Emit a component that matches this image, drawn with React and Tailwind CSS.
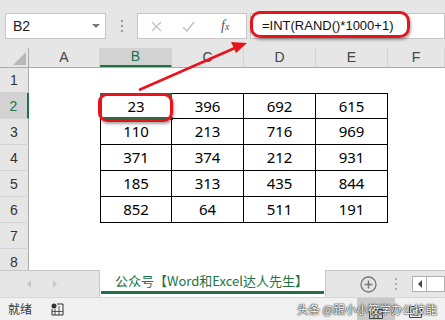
import React from 'react';

const cols = ['A', 'B', 'C', 'D', 'E', 'F'];
const colW = ['w-[71px]', 'w-[72px]', 'w-[72px]', 'w-[72px]', 'w-[72px]', 'flex-1'];

const data = [
  [23, 396, 692, 615],
  [110, 213, 716, 969],
  [371, 374, 212, 931],
  [185, 313, 435, 844],
  [852, 64, 511, 191],
];

const rows = [1, 2, 3, 4, 5, 6, 7, 8];

const Toolbar = () => (
  <div className="h-[48px] bg-[#e6e6e6] flex items-center pt-[4px] pl-[5px] gap-0">
    {/* Name box */}
    <div className="w-[101px] h-[26px] bg-white border border-[#c6c6c6] flex items-center justify-between pl-[7px] pr-[5px]">
      <span className="text-[14px] text-[#222]">B2</span>
      <span className="w-0 h-0 border-l-[4px] border-r-[4px] border-t-[4px] border-l-transparent border-r-transparent border-t-[#777]" />
    </div>
    {/* separator dots */}
    <div className="w-[31px] flex flex-col items-center gap-[3px]">
      <span className="w-[2px] h-[2px] bg-[#999]" />
      <span className="w-[2px] h-[2px] bg-[#999]" />
      <span className="w-[2px] h-[2px] bg-[#999]" />
    </div>
    {/* cancel / enter / fx */}
    <div className="w-[110px] h-[26px] bg-white border border-[#c6c6c6] flex items-center pl-[13px] gap-[20px]">
      <svg width="11" height="11" viewBox="0 0 11 11">
        <path d="M1 1 L10 10 M10 1 L1 10" stroke="#c4c4c4" strokeWidth="1.4" fill="none" />
      </svg>
      <svg width="13" height="11" viewBox="0 0 13 11">
        <path d="M1 6 L5 10 L12 1" stroke="#c4c4c4" strokeWidth="1.6" fill="none" />
      </svg>
      <span className="ml-[6px] text-[14px] italic text-[#555] font-['Liberation_Serif'] leading-none">
        f<span className="text-[10px]">x</span>
      </span>
    </div>
    {/* formula input */}
    <div className="ml-[3px] flex-1 h-[26px] bg-white border border-[#c6c6c6] flex items-center pl-[11px]">
      <span className="text-[13px] text-[#111]">=INT(RAND()*1000+1)</span>
    </div>
  </div>
);

const HeaderRow = () => (
  <div className="flex h-[20px] bg-[#e6e6e6] border-b border-[#ababab]">
    <div className="w-[29px] border-r border-[#ababab] flex items-end justify-end pr-[2px] pb-[2px]">
      <svg width="13" height="13" viewBox="0 0 13 13">
        <polygon points="13,0 13,13 0,13" fill="#b8b8b8" />
      </svg>
    </div>
    {cols.map((c, i) => (
      <div
        key={c}
        className={`${colW[i]} flex items-center justify-center text-[14px] border-r border-[#d4d4d4] ${
          c === 'B' ? 'bg-[#d2d2d2] text-[#217346] border-b-2 border-b-[#217346]' : 'text-[#444]'
        }`}
      >
        {c}
      </div>
    ))}
  </div>
);

const SheetRow = ({ n }) => {
  const vals = n >= 2 && n <= 6 ? data[n - 2] : null;
  const h = n === 1 ? 'h-[25px]' : 'h-[26px]';
  return (
    <div className={`flex ${h}`}>
      <div
        className={`w-[29px] shrink-0 border-r border-b border-[#ababab] border-b-[#d4d4d4] flex items-end justify-center pb-[1px] text-[14px] ${
          n === 2 ? 'bg-[#d2d2d2] text-[#217346] border-r-2 border-r-[#217346]' : 'bg-[#e6e6e6] text-[#333]'
        }`}
      >
        {n}
      </div>
      <div className="w-[71px]" />
      {[0, 1, 2, 3].map((j) => (
        <div
          key={j}
          className={`w-[72px] flex items-center justify-center text-[15px] text-black font-['Noto_Sans'] relative ${
            vals ? 'border-r border-b border-black' : ''
          } ${vals && j === 0 ? 'border-l' : ''} ${n === 2 ? 'border-t' : ''}`}
        >
          {vals ? vals[j] : ''}
          {n === 2 && j === 0 && (
            <>
              <span className="absolute inset-[-1px] border-2 border-[#217346]" />
              <span className="absolute right-[-3px] bottom-[-3px] w-[5px] h-[5px] bg-[#217346] border border-white" />
            </>
          )}
        </div>
      ))}
      <div className="flex-1" />
    </div>
  );
};

const TabBar = () => (
  <div className="h-[27px] flex">
    <div className="w-[100px] bg-[#e6e6e6] border-t border-r border-[#c6c6c6] flex items-center pl-[27px] gap-[22px]">
      <span className="w-0 h-0 border-t-[4px] border-b-[4px] border-r-[4px] border-t-transparent border-b-transparent border-r-[#c8c8c8]" />
      <span className="w-0 h-0 border-t-[4px] border-b-[4px] border-l-[4px] border-t-transparent border-b-transparent border-l-[#c8c8c8]" />
    </div>
    <div className="w-[225px] bg-white flex flex-col">
      <div className="flex-1 flex items-center pl-[15px] text-[13px] text-[#217346] font-['Noto_Sans_CJK_SC',sans-serif] leading-none">
        公众号【Word和Excel达人先生】
      </div>
      <div className="h-[3px] bg-[#217346] mx-[1px] mb-[3px]" />
    </div>
    <div className="flex-1 bg-[#e6e6e6] border-t border-l border-[#c6c6c6] flex items-center pl-[34px]">
      <svg width="17" height="17" viewBox="0 0 17 17">
        <circle cx="8.5" cy="8.5" r="7.5" stroke="#777" strokeWidth="1.3" fill="none" />
        <path d="M8.5 4.5 V12.5 M4.5 8.5 H12.5" stroke="#777" strokeWidth="1.5" />
      </svg>
      <div className="ml-[18px] flex flex-col gap-[3px]">
        <span className="w-[2px] h-[2px] bg-[#aaa]" />
        <span className="w-[2px] h-[2px] bg-[#aaa]" />
        <span className="w-[2px] h-[2px] bg-[#aaa]" />
      </div>
      <div className="ml-[15px] flex-1 h-[16px] border border-[#b0b0b0] flex bg-white">
        <div className="w-[14px] border-r border-[#b0b0b0] flex items-center justify-center">
          <span className="w-0 h-0 border-t-[4px] border-b-[4px] border-r-[4px] border-t-transparent border-b-transparent border-r-[#444]" />
        </div>
      </div>
    </div>
  </div>
);

const StatusBar = () => (
  <div className="h-[23px] bg-[#f1f1f1] border-t border-[#d6d6d6] flex items-center relative">
    <span className="ml-[8px] text-[12px] text-[#333] font-['Noto_Sans_CJK_SC',sans-serif]">就绪</span>
    <svg className="ml-[19px]" width="13" height="13" viewBox="0 0 13 13">
      <circle cx="3" cy="3" r="2.5" fill="#333" />
      <path d="M6 1 H12 V12 H1 V6" stroke="#333" strokeWidth="1" fill="none" />
      <path d="M1 8.5 H12 M4 6 V12 M8 3 V12" stroke="#333" strokeWidth="0.8" />
    </svg>
    <div className="ml-auto mr-[50px] w-[38px] h-full bg-[#c8c8c8] flex items-end justify-center pb-[1px]">
      <svg width="14" height="10" viewBox="0 0 14 10">
        <path d="M0.5 0.5 H13.5 V9.5 H0.5 Z M0.5 5 H13.5 M5 0.5 V9.5 M9 0.5 V9.5" stroke="#444" strokeWidth="1" fill="none" />
      </svg>
    </div>
    <svg className="absolute left-[409px] bottom-[2px]" width="13" height="12" viewBox="0 0 13 12">
      <path d="M0.5 0.5 H12.5 V11.5 H0.5 Z M3 3 H10 V9 H3 Z" stroke="#444" strokeWidth="1" fill="none" />
    </svg>
    <span className="absolute left-[297px] top-[3px] text-[11.5px] text-white font-['Noto_Sans_CJK_SC',sans-serif] [text-shadow:0_0_2px_#000,0_0_1px_#000]">
      头条 @跟小小筱学办公技能
    </span>
  </div>
);

const App = () => {
  return (
    <div className="w-[445px] h-[320px] relative overflow-hidden bg-white font-['Liberation_Sans',sans-serif]">
      <Toolbar />
      <HeaderRow />
      <div className="h-[202px] overflow-hidden">
        {rows.map((n) => (
          <SheetRow key={n} n={n} />
        ))}
      </div>
      <TabBar />
      <StatusBar />

      {/* annotations */}
      <div className="absolute left-[250px] top-[11px] w-[160px] h-[27px] rounded-[10px] border-[3px] border-[#e8141b] shadow-[1px_2px_3px_rgba(0,0,0,0.35)]" />
      <div className="absolute left-[98px] top-[93px] w-[75px] h-[29px] rounded-[9px] border-[3px] border-[#e8141b] shadow-[1px_2px_3px_rgba(0,0,0,0.35)]" />
      <svg className="absolute left-0 top-0 pointer-events-none" width="445" height="320">
        <line x1="139" y1="90" x2="236" y2="47.5" stroke="#e8141b" strokeWidth="2.5" />
        <polygon points="247,43 231,42 236,53" fill="#e8141b" />
      </svg>
    </div>
  );
};

export default App;
